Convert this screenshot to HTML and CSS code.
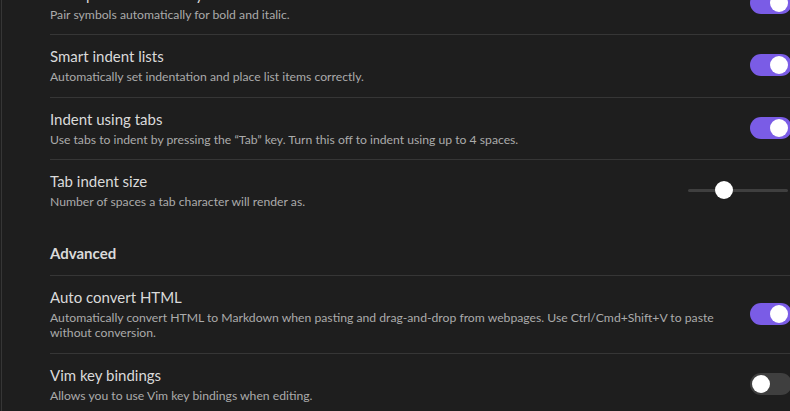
FILE: index.html
```html
<!DOCTYPE html>
<html>
<head>
<meta charset="utf-8">
<link rel="stylesheet" href="styles.css">
</head>
<body>
<div class="pane">
  <div class="settings">
    <div class="item">
      <div class="info">
        <div class="name">Auto pair Markdown syntax</div>
        <div class="desc">Pair symbols automatically for bold and italic.</div>
      </div>
      <div class="control"><div class="toggle on"><div class="knob"></div></div></div>
    </div>
    <div class="item">
      <div class="info">
        <div class="name">Smart indent lists</div>
        <div class="desc">Automatically set indentation and place list items correctly.</div>
      </div>
      <div class="control"><div class="toggle on"><div class="knob"></div></div></div>
    </div>
    <div class="item">
      <div class="info">
        <div class="name">Indent using tabs</div>
        <div class="desc">Use tabs to indent by pressing the “Tab” key. Turn this off to indent using up to 4 spaces.</div>
      </div>
      <div class="control"><div class="toggle on"><div class="knob"></div></div></div>
    </div>
    <div class="item">
      <div class="info">
        <div class="name">Tab indent size</div>
        <div class="desc">Number of spaces a tab character will render as.</div>
      </div>
      <div class="control">
        <div class="slider"><div class="track"></div><div class="thumb"></div></div>
      </div>
    </div>
    <div class="item heading">
      <div class="info">
        <div class="name">Advanced</div>
      </div>
    </div>
    <div class="item">
      <div class="info">
        <div class="name">Auto convert HTML</div>
        <div class="desc">Automatically convert HTML to Markdown when pasting and drag-and-drop from webpages. Use Ctrl/Cmd+Shift+V to paste without conversion.</div>
      </div>
      <div class="control"><div class="toggle on"><div class="knob"></div></div></div>
    </div>
    <div class="item">
      <div class="info">
        <div class="name">Vim key bindings</div>
        <div class="desc">Allows you to use Vim key bindings when editing.</div>
      </div>
      <div class="control"><div class="toggle"><div class="knob"></div></div></div>
    </div>
  </div>
</div>
</body>
</html>
```

FILE: styles.css
```css
html, body {
  margin: 0;
  background: #1e1e1e;
  overflow: hidden;
  height: 411px;
}
body {
  font-family: Lato, "Noto Sans", sans-serif;
  color: #dadada;
}
.pane {
  display: flow-root;
  margin-left: 1px;
  margin-right: -2px;
  border-left: 1px solid #363636;
  height: 411px;
  padding-left: 48px;
}
.settings {
  margin-top: -27.5px;
}
.item {
  display: flex;
  align-items: center;
  padding: 11px 0 12px;
}
.item + .item {
  border-top: 1px solid #363636;
}
.item.heading {
  border-top: none;
  padding: 21.7px 0 11.8px;
}
.info {
  flex: 1 1 auto;
  margin-right: 20px;
}
.name {
  font-size: 15px;
  line-height: 20px;
}
.heading .name {
  font-weight: 700;
}
.desc {
  font-size: 12.2px;
  line-height: 15.5px;
  margin-top: 3px;
  color: #ababab;
}
.control {
  flex: 0 0 auto;
  display: flex;
  justify-content: flex-end;
}
.toggle {
  position: relative;
  width: 42px;
  height: 22px;
  border-radius: 11px;
  background: #3f3f3f;
}
.toggle.on {
  background: #7a5ce6;
}
.knob {
  position: absolute;
  top: 2px;
  left: 2px;
  width: 18px;
  height: 18px;
  border-radius: 50%;
  background: #ffffff;
}
.toggle.on .knob {
  left: 20px;
}
.slider {
  position: relative;
  width: 100px;
  height: 18px;
  margin-right: 4px;
  display: flex;
  align-items: center;
}
.track {
  width: 100%;
  height: 3px;
  background: #3f3f3f;
  border-radius: 2px;
}
.thumb {
  position: absolute;
  left: 27px;
  top: 0;
  width: 18px;
  height: 18px;
  border-radius: 50%;
  background: #ffffff;
}
```
